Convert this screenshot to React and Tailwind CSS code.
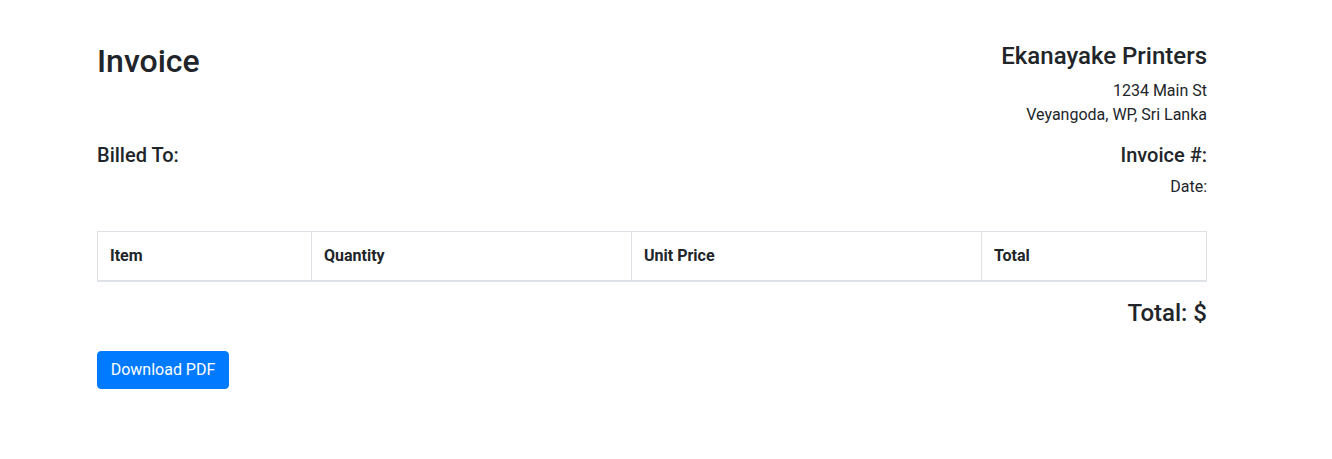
export default function App() {
	return (
		<div className="min-h-screen bg-white font-['Roboto',sans-serif] text-[#212529]">
			<div className="ml-[97px] w-[1110px] pt-[42px]">
				<div className="flex justify-between">
					<h2 className="text-[32px] font-medium leading-[1.2]">Invoice</h2>
					<div className="text-right">
						<h4 className="mb-2 text-[24px] font-medium leading-[1.2]">Ekanayake Printers</h4>
						<p className="mb-4 text-base leading-6">
							1234 Main St
							<br />
							Veyangoda, WP, Sri Lanka
						</p>
					</div>
				</div>

				<div className="flex justify-between">
					<h5 className="text-[20px] font-medium leading-[1.2]">Billed To:</h5>
					<div className="text-right">
						<h5 className="mb-2 text-[20px] font-medium leading-[1.2]">Invoice #:</h5>
						<p className="mb-4 text-base leading-6">Date:</p>
					</div>
				</div>

				<table className="mt-4 mb-[17px] w-full border-collapse border border-[#dee2e6] text-left">
					<thead>
						<tr>
							<th className="w-[214px] border border-b-2 border-[#dee2e6] p-3 text-base font-bold leading-6">Item</th>
							<th className="w-[320px] border border-b-2 border-[#dee2e6] p-3 text-base font-bold leading-6">Quantity</th>
							<th className="w-[350px] border border-b-2 border-[#dee2e6] p-3 text-base font-bold leading-6">Unit Price</th>
							<th className="border border-b-2 border-[#dee2e6] p-3 text-base font-bold leading-6">Total</th>
						</tr>
					</thead>
					<tbody></tbody>
				</table>

				<h4 className="mb-2 text-right text-[24px] font-medium leading-[1.2]">Total: $</h4>

				<button className="mt-[15px] w-[132px] rounded-[4px] border border-[#007bff] bg-[#007bff] py-1.5 text-center text-base leading-6 text-white">
					Download PDF
				</button>
			</div>
		</div>
	);
}
